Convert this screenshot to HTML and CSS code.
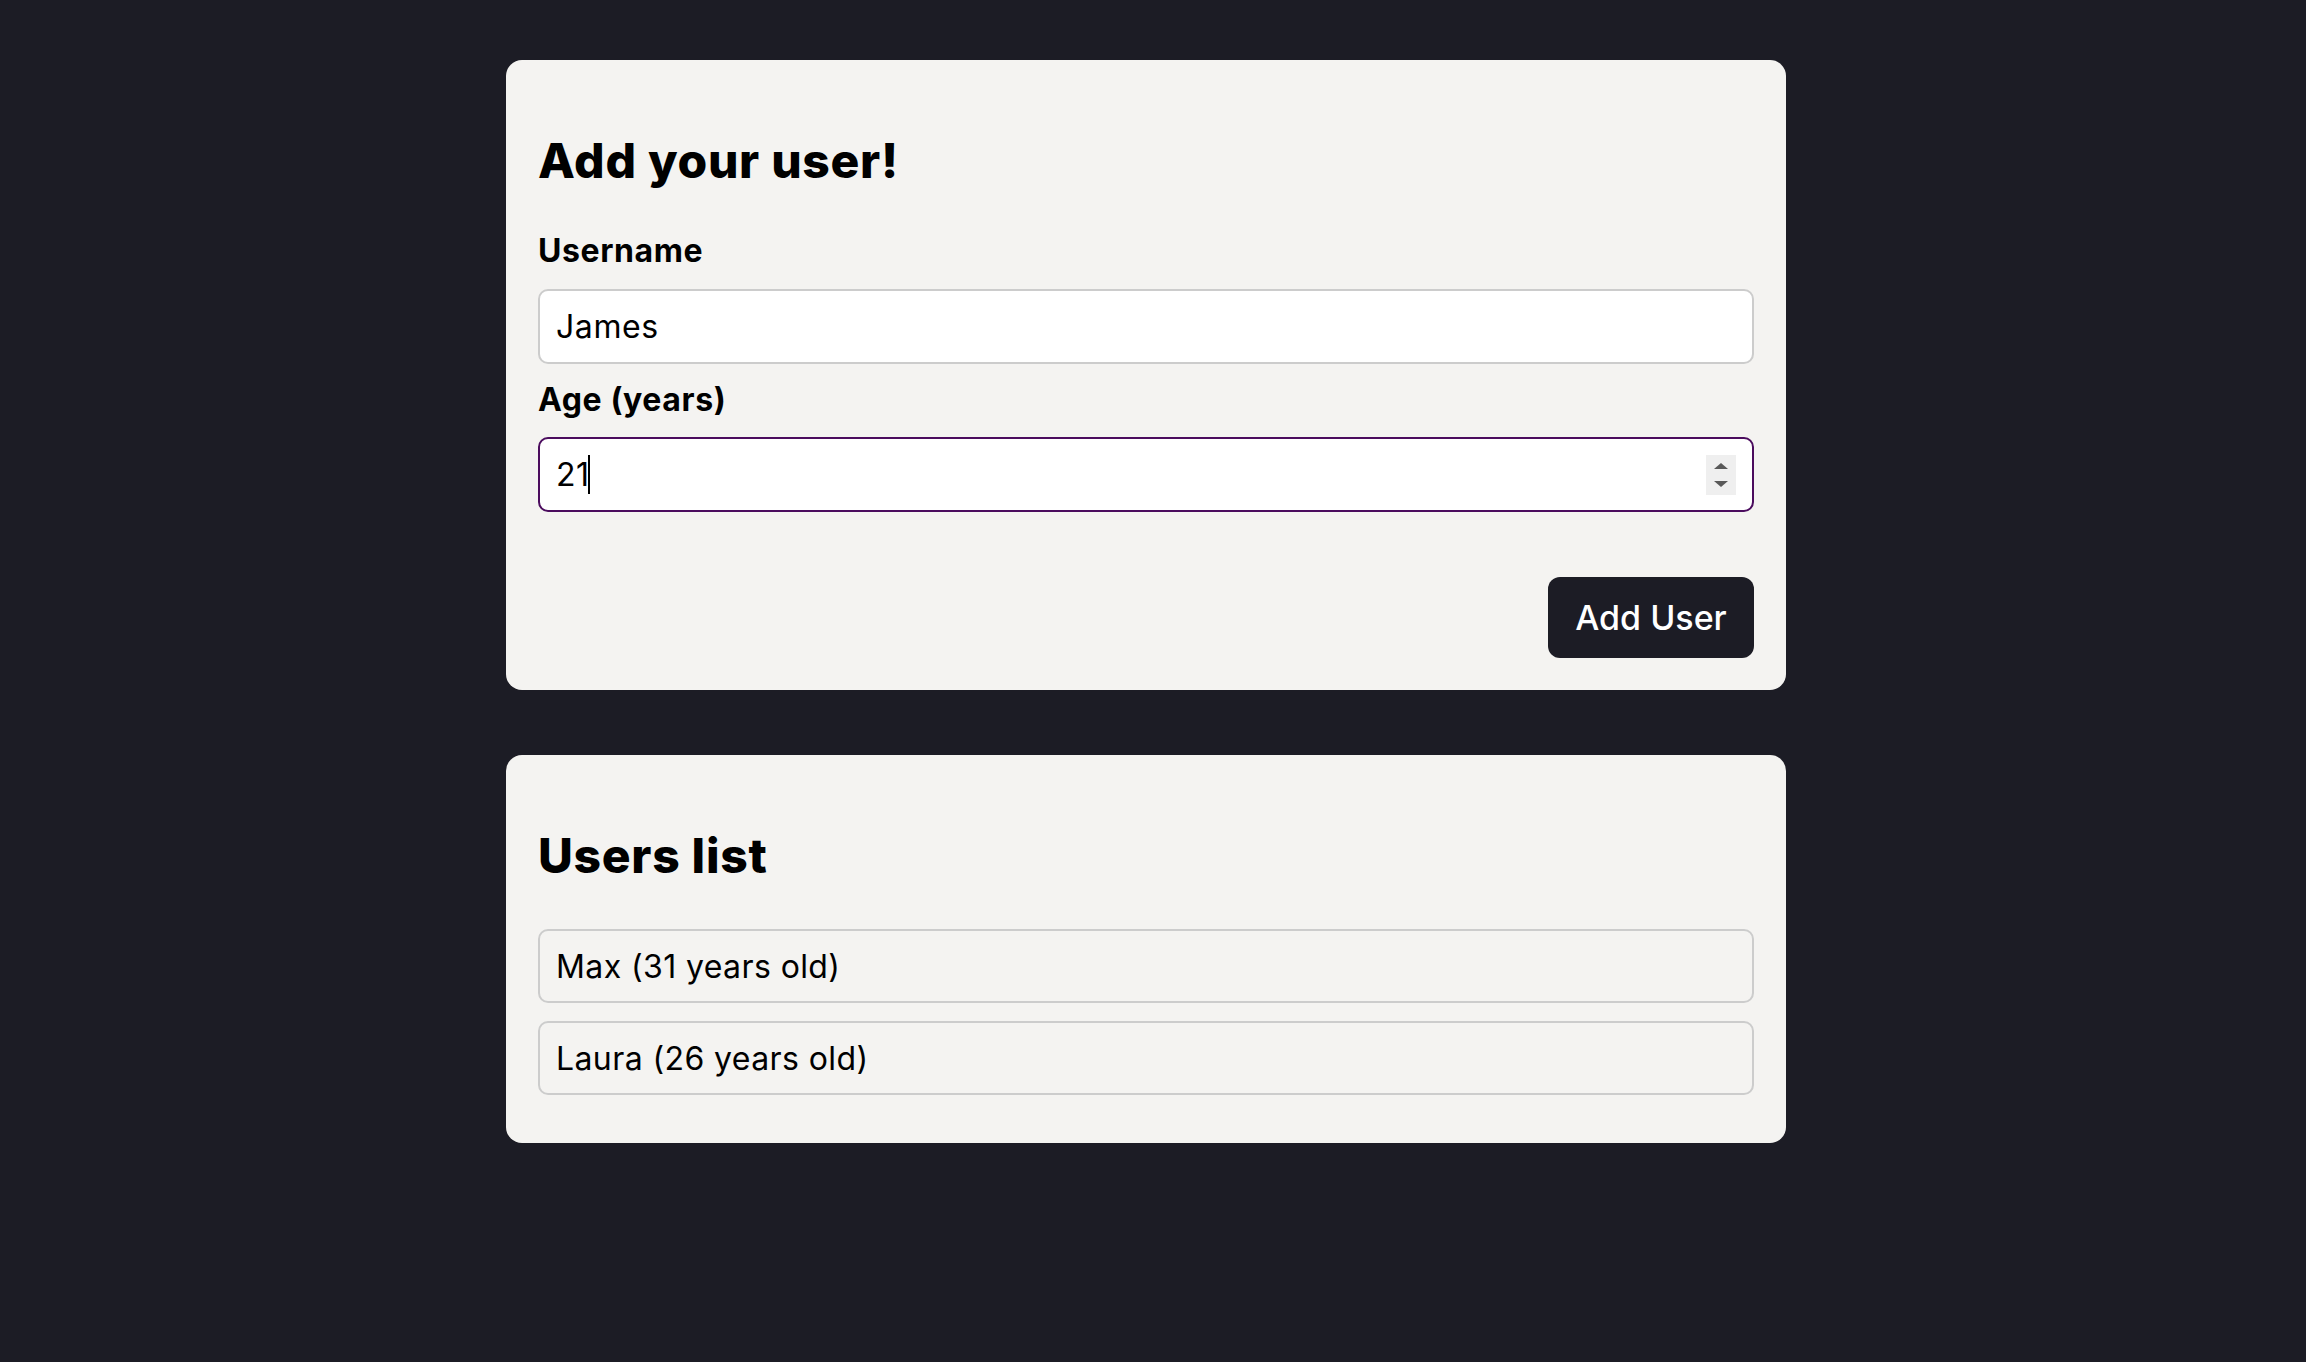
FILE: index.html
```html
<!DOCTYPE html>
<html lang="en">
<head>
<meta charset="utf-8">
<title>Add your user</title>
<link rel="stylesheet" href="styles.css">
</head>
<body>
<main class="page">
  <section class="card">
    <form class="form">
      <h2 class="title">Add your user!</h2>
      <label class="label" for="username">Username</label>
      <input class="field" id="username" type="text" value="James">
      <label class="label label-age" for="age">Age (years)</label>
      <div class="field-wrap">
        <input class="field field-focus" id="age" type="text" value="21">
        <span class="caret"></span>
        <span class="spinner"><span class="tri up"></span><span class="tri down"></span></span>
      </div>
      <div class="actions"><button class="btn" type="button">Add User</button></div>
    </form>
  </section>
  <section class="card card-list">
    <h2 class="title">Users list</h2>
    <ul class="users">
      <li class="user">Max (31 years old)</li>
      <li class="user">Laura (26 years old)</li>
    </ul>
  </section>
</main>
</body>
</html>
```
FILE: styles.css
```css
* { box-sizing: border-box; }
html, body { margin: 0; padding: 0; }
body {
  background: #1c1c25;
  font-family: Inter, "Noto Sans", "Liberation Sans", sans-serif;
  color: #000;
  min-height: 1362px;
  padding: 60px 14px 0 0;
}
.page {
  width: 1280px;
  margin: 0 auto;
  display: flex;
  flex-direction: column;
  gap: 65px;
}
.card {
  background: #f4f3f1;
  border-radius: 16px;
  padding: 32px;
}
.form { display: flex; flex-direction: column; margin: 0; }
.title {
  margin: 40px 0 0;
  font-size: 48px;
  line-height: 58px;
  font-weight: 800;
  letter-spacing: 0.7px;
}
.label {
  display: block;
  margin-top: 42px;
  font-size: 32px;
  line-height: 38px;
  font-weight: 700;
  letter-spacing: 0.6px;
}
.label-age { margin-top: 17px; }
.field {
  display: block;
  width: 100%;
  height: 75px;
  margin-top: 19px;
  padding: 0 16px;
  border: 2px solid #cccccc;
  border-radius: 10px;
  background: #fff;
  font-family: inherit;
  font-size: 32px;
  letter-spacing: 0.6px;
  color: #000;
  outline: none;
}
.field-wrap { position: relative; margin-top: 18px; }
.field-wrap .field { margin-top: 0; }
.field-focus { border-color: #4b0c5e; }
.caret {
  position: absolute;
  left: 50px;
  top: 18px;
  width: 1.5px;
  height: 39px;
  background: #000;
}
.spinner {
  position: absolute;
  right: 18px;
  top: 18px;
  width: 30px;
  height: 40px;
  background: #efefef;
  display: flex;
  flex-direction: column;
  align-items: center;
  padding-top: 8px;
  gap: 12px;
}
.tri { width: 0; height: 0; border-left: 7px solid transparent; border-right: 7px solid transparent; }
.up { border-bottom: 6px solid #595959; }
.down { border-top: 6px solid #595959; }
.actions { display: flex; justify-content: flex-end; margin-top: 65px; }
.btn {
  height: 81px;
  width: 206px;
  border: none;
  border-radius: 12px;
  background: #1c1c25;
  color: #fff;
  font-family: inherit;
  font-size: 34px;
  font-weight: 500;
  cursor: pointer;
}
.card-list { padding-bottom: 48px; }
.users {
  list-style: none;
  margin: 44px 0 0;
  padding: 0;
  display: flex;
  flex-direction: column;
  gap: 18px;
}
.user {
  height: 74px;
  display: flex;
  align-items: center;
  padding: 0 16px;
  border: 2px solid #cccccc;
  border-radius: 10px;
  font-size: 32px;
  letter-spacing: 0.4px;
}
```
